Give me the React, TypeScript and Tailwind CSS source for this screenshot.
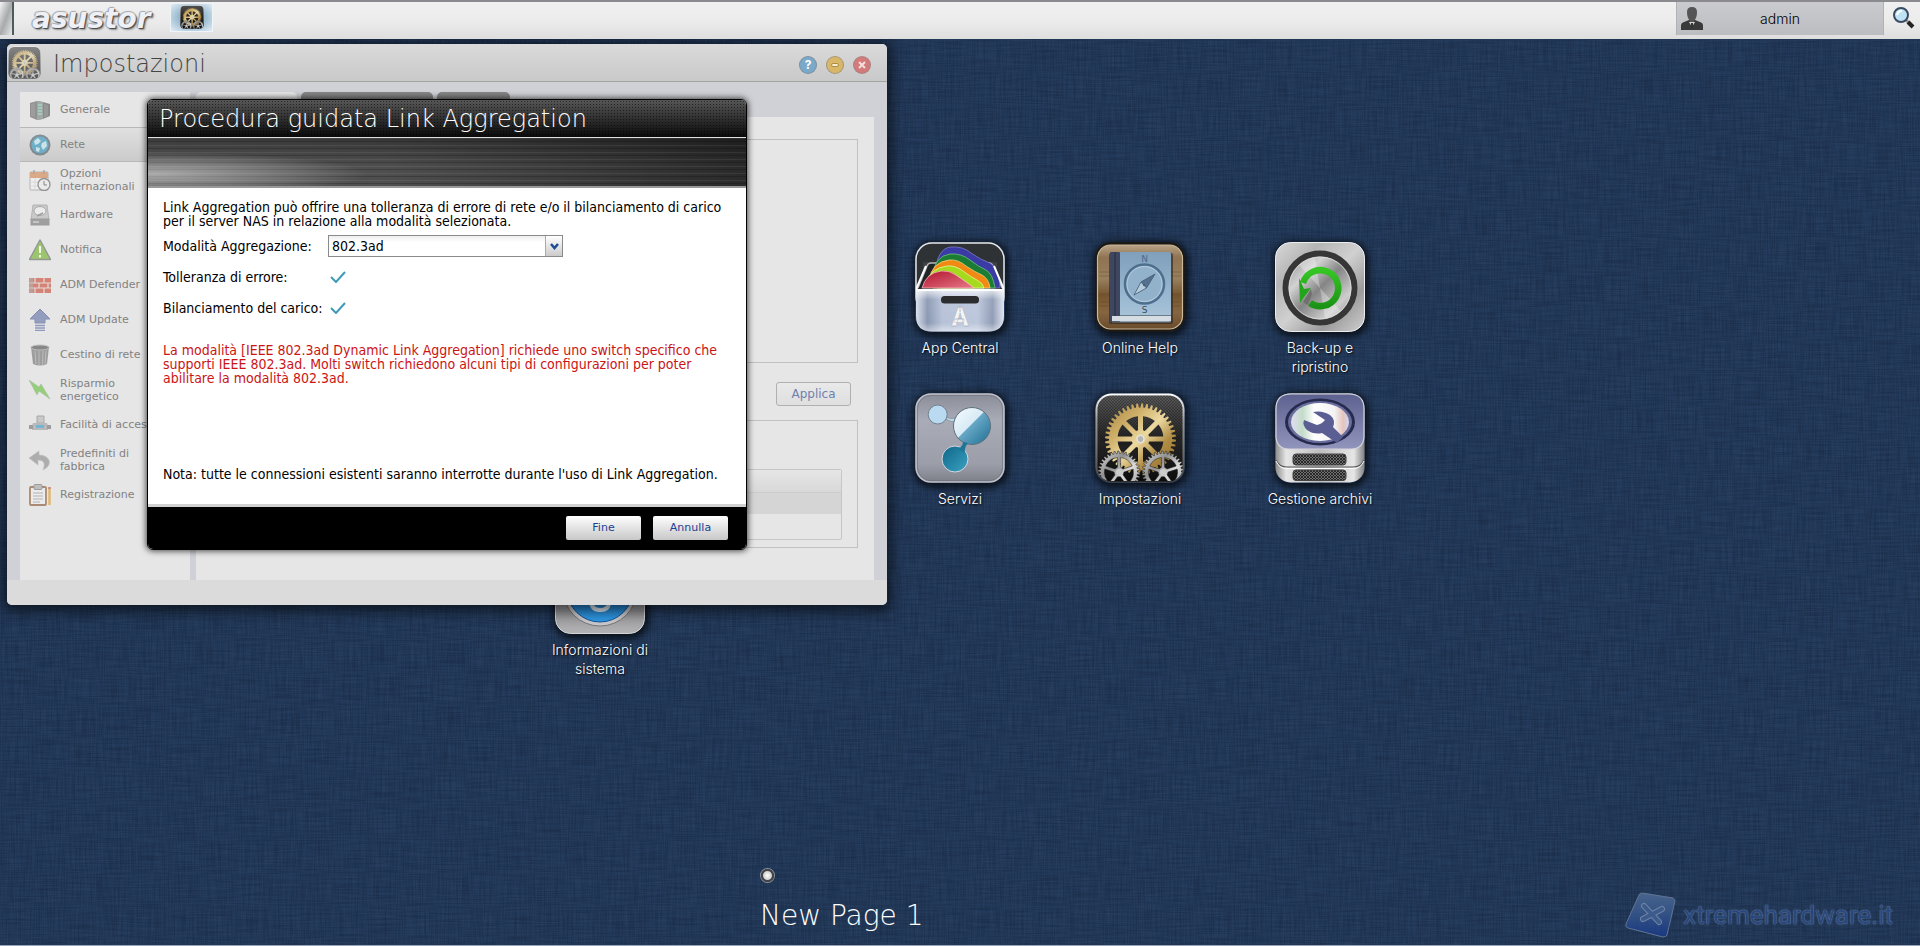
import React, { useState } from 'react';

// Outline of a toothed wheel with cut-out windows between the spokes (fill-rule: evenodd)
function gearPath(cx: number, cy: number, teeth: number, outer: number, root: number, spokes: number, rim: number, hub: number, half: number) {
  const pt = (r: number, a: number) => `${(cx + r * Math.cos(a)).toFixed(2)} ${(cy + r * Math.sin(a)).toFixed(2)}`;
  const step = (Math.PI * 2) / teeth;
  let d = '';
  for (let i = 0; i < teeth; i++) {
    const a = i * step;
    d += `${i ? 'L' : 'M'}${pt(root, a)}L${pt(outer, a + step * 0.15)}L${pt(outer, a + step * 0.5)}L${pt(root, a + step * 0.65)}`;
  }
  d += 'Z';
  const wedge = (Math.PI * 2) / spokes;
  for (let i = 0; i < spokes; i++) {
    const a0 = i * wedge - Math.PI / 2;
    const a1 = a0 + wedge;
    const dr = Math.asin(half / rim);
    const dh = Math.asin(half / hub);
    d += `M${pt(hub, a0 + dh)}L${pt(rim, a0 + dr)}A${rim} ${rim} 0 0 1 ${pt(rim, a1 - dr)}L${pt(hub, a1 - dh)}Z`;
  }
  return d;
}

const goldGear = gearPath(45.5, 46, 44, 35.5, 31.5, 8, 23, 9, 2.5);
const leftGear = gearPath(24, 79, 34, 21, 18.5, 5, 14.5, 5, 1.6);
const rightGear = gearPath(68, 79, 34, 21, 18.5, 5, 14.5, 5, 1.6);

function GearsIcon({ className }: { className?: string }) {
  return (
    <svg viewBox="0 0 90 90" className={className} aria-hidden="true">
      <defs>
        <linearGradient id="gearBack" x1="0" y1="0" x2="0" y2="1">
          <stop offset="0" stopColor="#5a5a5a" />
          <stop offset="0.5" stopColor="#262626" />
          <stop offset="1" stopColor="#0c0c0c" />
        </linearGradient>
        <linearGradient id="gearRim" x1="0" y1="0" x2="0" y2="1">
          <stop offset="0" stopColor="#fff" />
          <stop offset="0.3" stopColor="#999" />
          <stop offset="1" stopColor="#444" />
        </linearGradient>
        <linearGradient id="gold" x1="0" y1="0" x2="1" y2="1">
          <stop offset="0" stopColor="#a3803c" />
          <stop offset="0.3" stopColor="#cfb06a" />
          <stop offset="0.5" stopColor="#ecd9a0" />
          <stop offset="0.7" stopColor="#b08c44" />
          <stop offset="1" stopColor="#8d6b2b" />
        </linearGradient>
        <linearGradient id="silver" x1="0" y1="0" x2="1" y2="1">
          <stop offset="0" stopColor="#e8e8e8" />
          <stop offset="0.35" stopColor="#8f8f8f" />
          <stop offset="0.6" stopColor="#dcdcdc" />
          <stop offset="1" stopColor="#888" />
        </linearGradient>
        <pattern id="carbon" width="3" height="3" patternUnits="userSpaceOnUse">
          <path d="M0 0L3 3M3 0L0 3" stroke="#000" strokeOpacity="0.35" strokeWidth="0.6" />
        </pattern>
        <clipPath id="gearClip"><rect x="2" y="2" width="86" height="86" rx="14" /></clipPath>
      </defs>
      <rect x="0.5" y="0.5" width="89" height="89" rx="16" fill="url(#gearRim)" />
      <rect x="2.5" y="2.5" width="85" height="86" rx="14" fill="url(#gearBack)" />
      <rect x="2.5" y="2.5" width="85" height="50" rx="14" fill="url(#carbon)" />
      <g clipPath="url(#gearClip)">
        <path d={goldGear} fillRule="evenodd" fill="url(#gold)" />
        <circle cx="45.5" cy="46" r="5" fill="#e5d6a6" />
        <circle cx="45.5" cy="46" r="3.5" fill="#b5b5b5" stroke="#eee" />
        <path d={leftGear} fillRule="evenodd" fill="url(#silver)" stroke="#1a1a1a" strokeWidth="0.5" />
        <path d={rightGear} fillRule="evenodd" fill="url(#silver)" stroke="#1a1a1a" strokeWidth="0.5" />
        <circle cx="24" cy="79" r="3" fill="#ccc" />
        <circle cx="68" cy="79" r="3" fill="#ccc" />
      </g>
    </svg>
  );
}

function AppCentralIcon() {
  return (
    <svg viewBox="0 0 90 90" className="size-full" aria-hidden="true">
      <defs>
        <linearGradient id="acFront" x1="0" y1="0" x2="1" y2="0">
          <stop offset="0" stopColor="#d7deeb" />
          <stop offset="0.13" stopColor="#8593ae" />
          <stop offset="0.3" stopColor="#b3bfd6" />
          <stop offset="0.7" stopColor="#b9c4da" />
          <stop offset="0.87" stopColor="#8b98b2" />
          <stop offset="1" stopColor="#dde3ee" />
        </linearGradient>
        <linearGradient id="acShade" x1="0" y1="0" x2="0" y2="1">
          <stop offset="0" stopColor="#fff" stopOpacity="0.8" />
          <stop offset="0.25" stopColor="#fff" stopOpacity="0.1" />
          <stop offset="0.8" stopColor="#fff" stopOpacity="0.05" />
          <stop offset="1" stopColor="#fff" stopOpacity="0.5" />
        </linearGradient>
        <linearGradient id="acRed" x1="0" y1="0" x2="1" y2="1">
          <stop offset="0" stopColor="#b0122c" />
          <stop offset="1" stopColor="#e87a8a" />
        </linearGradient>
      </defs>
      <rect x="1" y="1" width="88" height="70" rx="16" fill="#2f3234" stroke="#e8e8e8" strokeWidth="1.5" />
      <path d="M8 20H82V48H8Z" fill="#3c4042" />
      <path d="M3 46L12 24Q13 21 16 21H74Q77 21 78 24L87 46" fill="#212427" stroke="#b5b5b5" strokeWidth="1.5" />
      <path d="M20 32Q22 6 36 5Q48 4 56 11Q66 18 75 21Q84 26 85 46H30Z" fill="#3b3ba6" stroke="#8484d6" strokeWidth="0.7" />
      <path d="M17 36Q19 14 35 12Q46 11 55 18Q64 25 71 28Q78 32 80 46H26Z" fill="#1b7d33" stroke="#7ed084" strokeWidth="0.7" />
      <path d="M14 38Q17 20 34 18Q43 17 51 24Q60 30 67 33Q74 37 75 46H22Z" fill="#f08a12" stroke="#ffd88c" strokeWidth="0.7" />
      <path d="M11 40Q16 26 32 24Q40 23 48 29Q56 35 62 38Q68 41 69 46H18Z" fill="#a6da1e" stroke="#ecffa8" strokeWidth="0.7" />
      <path d="M7 46Q11 31 26 29Q34 28 41 33Q48 38 54 42L59 46Z" fill="url(#acRed)" stroke="#ffc5c5" strokeWidth="0.7" />
      <path d="M1 47H89V74Q89 89.500 73 89.500H17Q1 89.500 1 74Z" fill="url(#acFront)" />
      <path d="M1 47H89V74Q89 89.500 73 89.500H17Q1 89.500 1 74Z" fill="url(#acShade)" />
      <path d="M11 24L2 45Q1 48 4 48H86Q89 48 88 45L79 24" fill="none" stroke="#fff" strokeWidth="2" />
      <rect x="26" y="54" width="38" height="7.500" rx="3.500" fill="#2c2d2e" />
      <text x="45" y="84" textAnchor="middle" fontSize="25" fontWeight="900" fontFamily="Roboto, sans-serif" fill="#f4f4f4" stroke="#8b94a8" strokeWidth="0.3">A</text>
    </svg>
  );
}

function HelpBookIcon() {
  return (
    <svg viewBox="0 0 90 90" className="size-full" aria-hidden="true">
      <defs>
        <linearGradient id="wood" x1="0" y1="0" x2="0" y2="1">
          <stop offset="0" stopColor="#b9a387" />
          <stop offset="0.15" stopColor="#8f7352" />
          <stop offset="0.4" stopColor="#98805f" />
          <stop offset="0.6" stopColor="#75552f" />
          <stop offset="0.8" stopColor="#866641" />
          <stop offset="1" stopColor="#6a4b2b" />
        </linearGradient>
        <linearGradient id="cover" x1="0" y1="0" x2="0" y2="1">
          <stop offset="0" stopColor="#7f9fbb" />
          <stop offset="1" stopColor="#a9c6dc" />
        </linearGradient>
      </defs>
      <rect x="0" y="0" width="90" height="90" rx="16" fill="#1c1814" />
      <rect x="2.500" y="3" width="85" height="84" rx="13" fill="url(#wood)" stroke="#c9b899" strokeWidth="1.200" />
      <path d="M4 30H86M4 34H86M4 52H86M4 60H86M4 64H86" stroke="#5c4120" strokeOpacity="0.35" />
      <rect x="14" y="11" width="64" height="71" rx="2" fill="#2a2118" fillOpacity="0.6" />
      <rect x="15" y="10" width="61" height="70" rx="2" fill="url(#cover)" />
      <rect x="15" y="10" width="10" height="70" rx="1" fill="#3e4660" />
      <path d="M20 10V80" stroke="#252b40" />
      <rect x="17" y="74" width="59" height="5" fill="#d6dde2" />
      <path d="M25 73.500H76M17 80H76" stroke="#6c7b88" />
      <circle cx="49.500" cy="42" r="19.500" fill="#92b1ca" stroke="#4e6e8e" strokeWidth="2.500" />
      <circle cx="49.500" cy="42" r="17.500" fill="none" stroke="#c4d8e6" strokeWidth="0.700" />
      <path d="M60 32L51.500 46L46 40Z" fill="#56718f" stroke="#3f5873" strokeWidth="0.800" />
      <path d="M39 53L51.500 46L46 40Z" fill="#b6cbdc" stroke="#3f5873" strokeWidth="0.800" />
      <circle cx="49" cy="43" r="1" fill="#3f5873" />
      <text x="49.500" y="20" textAnchor="middle" fontSize="9" fontFamily="DejaVu Sans, sans-serif" fill="#496a8c">N</text>
      <text x="49.500" y="71" textAnchor="middle" fontSize="9" fontFamily="DejaVu Sans, sans-serif" fill="#3b4a5a">S</text>
    </svg>
  );
}

function BackupIcon() {
  return (
    <svg viewBox="0 0 90 90" className="size-full" aria-hidden="true">
      <defs>
        <linearGradient id="buPlate" x1="0" y1="0" x2="1" y2="1">
          <stop offset="0" stopColor="#d9d9d9" />
          <stop offset="0.25" stopColor="#b5b5b5" />
          <stop offset="0.5" stopColor="#d0d0d0" />
          <stop offset="0.75" stopColor="#9c9c9c" />
          <stop offset="1" stopColor="#d0d0d0" />
        </linearGradient>
        <linearGradient id="buDisc" x1="0" y1="0" x2="1" y2="1">
          <stop offset="0" stopColor="#858585" />
          <stop offset="0.3" stopColor="#d2d2d2" />
          <stop offset="0.5" stopColor="#858585" />
          <stop offset="0.75" stopColor="#cdcdcd" />
          <stop offset="1" stopColor="#777" />
        </linearGradient>
        <linearGradient id="buGreen" x1="0" y1="0" x2="0" y2="1">
          <stop offset="0" stopColor="#35c623" />
          <stop offset="1" stopColor="#1b9416" />
        </linearGradient>
      </defs>
      <rect x="0.500" y="0.500" width="89" height="89" rx="15" fill="url(#buPlate)" stroke="#ededed" />
      <circle cx="45" cy="46" r="34.500" fill="url(#buDisc)" stroke="#363636" strokeWidth="6" />
      <circle cx="45" cy="46" r="31" fill="none" stroke="#ddd" strokeWidth="0.800" />
      <path d="M45 46L24 23A31 31 0 0 1 40 16Z" fill="#fff" fillOpacity="0.3" />
      <path d="M45 46L66 69A31 31 0 0 1 50 76Z" fill="#fff" fillOpacity="0.3" />
      <path d="M35 61A18 18 0 1 0 28 41" fill="none" stroke="url(#buGreen)" strokeWidth="6.500" />
      <path d="M24 36L25 61L29 55L36 46L29 47Z" fill="#23a51b" />
      <path d="M28 60L36 47L37 52L33 63Z" fill="#707070" />
    </svg>
  );
}

function ServicesIcon() {
  return (
    <svg viewBox="0 0 90 90" className="size-full" aria-hidden="true">
      <defs>
        <linearGradient id="svPlate" x1="0" y1="0" x2="0" y2="1">
          <stop offset="0" stopColor="#8a8c97" />
          <stop offset="0.3" stopColor="#a9abb6" />
          <stop offset="0.8" stopColor="#9b9da9" />
          <stop offset="1" stopColor="#7e8088" />
        </linearGradient>
        <linearGradient id="svBig" x1="0" y1="0" x2="1" y2="1">
          <stop offset="0" stopColor="#f5fbff" />
          <stop offset="0.46" stopColor="#d8eaf5" />
          <stop offset="0.48" stopColor="#68a7c6" />
          <stop offset="1" stopColor="#1c6d93" />
        </linearGradient>
        <linearGradient id="svLow" x1="0" y1="0" x2="1" y2="1">
          <stop offset="0" stopColor="#0f6587" />
          <stop offset="1" stopColor="#3ba3c3" />
        </linearGradient>
      </defs>
      <rect x="1" y="1" width="88" height="88" rx="15" fill="url(#svPlate)" stroke="#c0c1ca" strokeWidth="1.500" />
      <rect x="2.500" y="2.500" width="85" height="85" rx="13" fill="none" stroke="#6e707b" strokeOpacity="0.6" />
      <path d="M30 23Q35 27 40 25L41 29Q35 29 31 26Z" fill="#bcd9ec" stroke="#75808c" strokeWidth="0.600" />
      <circle cx="22.700" cy="21.500" r="9.500" fill="#b9daf0" stroke="#72818f" />
      <circle cx="57" cy="33" r="18.500" fill="url(#svBig)" stroke="#5e717e" />
      <circle cx="40" cy="66" r="13" fill="url(#svLow)" stroke="#d4d7de" />
      <path d="M48 49Q48 53 43 56L50 60Q49 55 53 50Z" fill="#1f7596" />
    </svg>
  );
}

function StorageIcon() {
  return (
    <svg viewBox="0 0 90 90" className="size-full" aria-hidden="true">
      <defs>
        <linearGradient id="stBody" x1="0" y1="0" x2="1" y2="0">
          <stop offset="0" stopColor="#8c8c8c" />
          <stop offset="0.12" stopColor="#e6e6e6" />
          <stop offset="0.5" stopColor="#bdbdbd" />
          <stop offset="0.88" stopColor="#e6e6e6" />
          <stop offset="1" stopColor="#808080" />
        </linearGradient>
        <linearGradient id="stLid" x1="0" y1="0" x2="0" y2="1">
          <stop offset="0" stopColor="#5d6190" />
          <stop offset="1" stopColor="#9194bb" />
        </linearGradient>
        <linearGradient id="stDisc" x1="0" y1="0" x2="1" y2="0">
          <stop offset="0" stopColor="#e0ddf0" />
          <stop offset="0.2" stopColor="#c3dcc9" />
          <stop offset="0.4" stopColor="#fff" />
          <stop offset="0.75" stopColor="#f3f3f3" />
          <stop offset="0.9" stopColor="#e5c3bd" />
          <stop offset="1" stopColor="#cfd9ee" />
        </linearGradient>
        <pattern id="mesh" width="3" height="3" patternUnits="userSpaceOnUse">
          <rect width="3" height="3" fill="#6e6e6e" />
          <path d="M0 0L3 3M3 0L0 3" stroke="#1c1c1c" strokeWidth="0.800" />
        </pattern>
      </defs>
      <rect x="0.500" y="0.500" width="89" height="89" rx="15" fill="url(#stBody)" />
      <path d="M1 67Q4 74 12 74H78Q86 74 89 67" fill="none" stroke="#555" strokeWidth="1.200" />
      <path d="M1 68Q4 75.500 12 75.500H78Q86 75.500 89 68" fill="none" stroke="#fff" />
      <path d="M1 16Q1 1 16 1H74Q89 1 89 16V44Q88 56 76 56H14Q2 56 1 44Z" fill="url(#stLid)" stroke="#d3d3dc" strokeWidth="1.200" />
      <ellipse cx="45" cy="29" rx="35" ry="23.500" fill="#262a4d" />
      <ellipse cx="45" cy="29" rx="32" ry="21" fill="#6a6e9f" />
      <ellipse cx="45" cy="29" rx="29" ry="19" fill="url(#stDisc)" />
      <path d="M38 19L50 27Q47 31 42 32L29 27Q27 32 32 37Q39 42 47 40L62 50L68 44L58 34Q61 27 55 22Q47 17 38 19Z" fill="#5a5e92" />
      <rect x="18" y="61" width="53" height="11" rx="3" fill="url(#mesh)" stroke="#444" />
      <rect x="18" y="77" width="53" height="10.500" rx="3" fill="url(#mesh)" stroke="#444" />
    </svg>
  );
}

function SystemInfoIcon() {
  return (
    <svg viewBox="0 0 90 90" className="size-full" aria-hidden="true">
      <defs>
        <linearGradient id="siPlate" x1="0" y1="0" x2="0" y2="1">
          <stop offset="0" stopColor="#e3e3e3" />
          <stop offset="0.75" stopColor="#949497" />
          <stop offset="1" stopColor="#b4b4b7" />
        </linearGradient>
        <linearGradient id="siBlue" x1="0" y1="0" x2="0" y2="1">
          <stop offset="0" stopColor="#0c4f9b" />
          <stop offset="1" stopColor="#2f9be6" />
        </linearGradient>
      </defs>
      <rect x="0.500" y="0.500" width="89" height="89" rx="15" fill="url(#siPlate)" stroke="#d5d5d5" />
      <circle cx="45" cy="45" r="37" fill="#c9c9cb" stroke="#77777a" />
      <circle cx="45" cy="45" r="33" fill="url(#siBlue)" stroke="#15539a" />
      <path d="M36 56Q36 66 45 66Q54 66 54 58V50" fill="none" stroke="#e4edf5" strokeWidth="4" />
      <path d="M45 22V50" stroke="#fff" strokeWidth="8" />
    </svg>
  );
}

/* 22px icons of the settings menu */
const menuIcons: Record<string, React.ReactNode> = {
  general: (
    <>
      <path d="M1 4L8 2L14 3V20L8 21L1 18Z" fill="#666" />
      <path d="M8 2V21L14 20V3Z" fill="#7d8a86" />
      <path d="M14 3L21 5V17L14 20Z" fill="#5a5a5a" />
      <path d="M9 6L13 6M9 9H13M9 12H13M9 15H13" stroke="#7fd0b4" strokeWidth="1.500" />
      <path d="M3 5V17M5 4V18M16 5V18M18 6V17" stroke="#999" strokeWidth="0.700" />
    </>
  ),
  network: (
    <>
      <circle cx="11" cy="11" r="10.500" fill="#56646e" />
      <circle cx="11" cy="11" r="8.500" fill="#3a9cc0" />
      <path d="M5 7L9 4L12 7L9 10L6 11ZM13 9L17 7L18 12L14 16L12 12ZM7 13L11 14L10 18L7 17Z" fill="#c6ecf6" />
    </>
  ),
  regional: (
    <>
      <rect x="1" y="3" width="18" height="18" rx="1" fill="#f4f4f4" stroke="#999" />
      <rect x="1" y="3" width="18" height="6" fill="#d68a55" />
      <path d="M5 1V5M15 1V5" stroke="#888" strokeWidth="1.500" />
      <path d="M1 13H19M1 17H19M6 9V21M11 9V21" stroke="#ccc" strokeWidth="0.800" />
      <circle cx="15" cy="15.500" r="6" fill="#eee" stroke="#666" strokeWidth="1.300" />
      <path d="M15 12V16H18" fill="none" stroke="#555" />
    </>
  ),
  hardware: (
    <>
      <path d="M4 1H18L20 16H2Z" fill="#bbb" stroke="#999" />
      <rect x="2" y="15" width="18" height="6" fill="#7a7a7a" stroke="#777" />
      <ellipse cx="11" cy="7" rx="6" ry="4.500" fill="#eee" stroke="#888" />
      <path d="M8 12L14 9" stroke="#777" strokeWidth="1.500" />
      <path d="M4 18H10" stroke="#eee" />
    </>
  ),
  notify: (
    <>
      <path d="M11 1L21.500 20.500H0.500Z" fill="#74b52c" stroke="#6a7066" strokeWidth="1.500" strokeLinejoin="round" />
      <path d="M11 7V14M11 16V18.500" stroke="#fff" strokeWidth="2" />
    </>
  ),
  defender: (
    <>
      <path d="M0 4H22V19H0Z" fill="#c9503c" />
      <path d="M0 9H22M0 14H22M6 4V9M15 4V9M10 9V14M19 9V14M6 14V19M15 14V19" stroke="#e6d8d0" strokeWidth="1.200" />
      <path d="M0 4H4V19H0Z" fill="#999" fillOpacity="0.5" />
    </>
  ),
  update: (
    <>
      <path d="M11 0L21 10H16V14H6V10H1Z" fill="#6878ab" stroke="#556394" />
      <path d="M6 16.500H16M6 19H16M6 21.500H16" stroke="#6070a5" strokeWidth="1.500" />
    </>
  ),
  bin: (
    <>
      <path d="M2 3L4 20Q11 23 18 20L20 3Z" fill="#777" />
      <ellipse cx="11" cy="3.500" rx="9" ry="2.500" fill="#555" stroke="#aaa" />
      <path d="M6 7L7 20M10 7V21M14 7L13.500 21M17 7L16 20" stroke="#aaa" strokeWidth="0.900" />
    </>
  ),
  power: <path d="M0 1L10 8L12 5L21 20L10 12L8 16Z" fill="#69c23f" stroke="#8fae7e" strokeWidth="0.700" />,
  access: (
    <>
      <path d="M8 2H15V9H8Z" fill="#bbb" stroke="#888" />
      <path d="M4 9H18L19 12V16H3V12Z" fill="#a2a2a2" />
      <path d="M0 11H4V15H0ZM18 11H22V15H18Z" fill="#777" />
      <rect x="7" y="11" width="8" height="3" fill="#3b9cc8" />
    </>
  ),
  reset: <path d="M10 2L0 9L9 16V11Q18 11 14 21Q22 17 20 11Q17 6 10 6Z" fill="#909090" stroke="#aaa" strokeWidth="0.600" />,
  register: (
    <>
      <rect x="1" y="3" width="16" height="18" rx="1" fill="#eee" stroke="#8b5a35" strokeWidth="1.800" />
      <rect x="5" y="0.500" width="8" height="5" rx="1" fill="#aaa" stroke="#777" />
      <path d="M4 9H14M4 12H14M4 15H14M4 18H11" stroke="#999" />
      <path d="M20.500 4V21" stroke="#e0a030" strokeWidth="2.500" />
      <path d="M20.500 3V5" stroke="#b55" strokeWidth="2.500" />
    </>
  ),
};

const menuItems = [
  { icon: 'general', label: 'Generale' },
  { icon: 'network', label: 'Rete' },
  { icon: 'regional', label: 'Opzioni\ninternazionali' },
  { icon: 'hardware', label: 'Hardware' },
  { icon: 'notify', label: 'Notifica' },
  { icon: 'defender', label: 'ADM Defender' },
  { icon: 'update', label: 'ADM Update' },
  { icon: 'bin', label: 'Cestino di rete' },
  { icon: 'power', label: 'Risparmio\nenergetico' },
  { icon: 'access', label: 'Facilità di accesso' },
  { icon: 'reset', label: 'Predefiniti di\nfabbrica' },
  { icon: 'register', label: 'Registrazione' },
];

const shortcuts = [
  { label: 'App Central', icon: <AppCentralIcon />, place: 'col-start-3 row-start-1' },
  { label: 'Online Help', icon: <HelpBookIcon />, place: 'col-start-4 row-start-1' },
  { label: 'Back-up e ripristino', icon: <BackupIcon />, place: 'col-start-5 row-start-1' },
  { label: 'Servizi', icon: <ServicesIcon />, place: 'col-start-3 row-start-2' },
  { label: 'Impostazioni', icon: <GearsIcon className="size-full" />, place: 'col-start-4 row-start-2' },
  { label: 'Gestione archivi', icon: <StorageIcon />, place: 'col-start-5 row-start-2' },
  { label: 'Informazioni di sistema', icon: <SystemInfoIcon />, place: 'col-start-1 row-start-3' },
];

function CheckMark() {
  return (
    <svg viewBox="0 0 16 12" className="ml-0.5 h-3 w-4" role="img" aria-label="Sì">
      <path d="M1 6L6 11L15 1" fill="none" stroke="#3d9bb8" strokeWidth="2" />
    </svg>
  );
}

function TopBar() {
  return (
    <header className="relative z-10 flex h-[39px] items-start border-t-2 border-[#8b8b8f] bg-linear-to-b from-[#f0f0f0] via-[#ececec] to-[#dedede]">
      <div className="h-[33px] w-[14px] border-r-2 border-[#4c5b5b] bg-linear-to-br from-[#f5f5f5] via-[#a8aaac] to-[#e8e8e8]" />
      <span className='ml-[18px] w-[122px] font-["DejaVu_Sans"] text-[28px] leading-[33px] font-bold text-[#eef0f6] italic [text-shadow:1px_1px_1px_#444,-1px_0_1px_#9a9dab,0_-1px_1px_#aaa,2px_2px_2px_#999]'>
        asustor
      </span>
      <button aria-label="Impostazioni" className="mt-px ml-4 flex h-[29px] w-[43px] items-start justify-center border border-[#eef4f8] bg-radial from-[#5f93b5] to-[#e3edf3] pt-px">
        <GearsIcon className="size-6" />
      </button>
      <button className="relative ml-auto flex h-[33px] w-52 items-center justify-center border-x border-[#b0b2b6] bg-linear-to-b from-[#c9cbcf] to-[#bbbdc1] font-['Inter'] text-sm font-light text-black">
        <svg viewBox="0 0 22 24" className="absolute top-1 left-1 h-6 w-[22px]" aria-hidden="true">
          <path d="M0 24V19Q0 17 3 16L8 14H14L19 16Q22 17 22 19V24Z" fill="#3a3a3a" />
          <path d="M6 6Q6 1 11 1Q16 1 16 6Q16 12 13 15V16H9V15Q6 12 6 6Z" fill="#555" />
          <path d="M8 16L11 21L14 16Z" fill="#d5d5d5" />
          <path d="M10 17H12L12 22H10Z" fill="#333" />
        </svg>
        admin
      </button>
      <button aria-label="Cerca" className="mt-1 mr-1 ml-2">
        <svg viewBox="0 0 24 24" className="size-6">
          <path d="M14 14L17 17" stroke="#999" strokeWidth="3" />
          <path d="M16 16L21 21" stroke="#222" strokeWidth="4" />
          <circle cx="9" cy="9" r="7" fill="#bfe2f5" stroke="#3b4a60" strokeWidth="2" />
          <path d="M5 9Q6 5 10 5" fill="none" stroke="#fff" strokeWidth="2" />
        </svg>
      </button>
    </header>
  );
}

function WindowButtons() {
  return (
    <div className="mt-1 ml-auto flex gap-[11px] pr-[17px]">
      <button aria-label="Aiuto" className="flex size-4 items-center justify-center rounded-full bg-[#7aa9ca] font-['Inter'] text-[12px] font-bold text-white ring-1 ring-[#7a8f9e]">?</button>
      <button aria-label="Riduci" className="flex size-4 items-center justify-center rounded-full bg-[#d8b768] ring-1 ring-[#a39577]">
        <span className="h-1 w-2 rounded-xs border border-[#b08c40] bg-[#f6ecd0]" />
      </button>
      <button aria-label="Chiudi" className="flex size-4 items-center justify-center rounded-full bg-[#d37a7a] ring-1 ring-[#a88384]">
        <svg viewBox="0 0 10 10" className="size-2.5"><path d="M2 2L8 8M8 2L2 8" stroke="#f5dede" strokeWidth="2" /></svg>
      </button>
    </div>
  );
}

function LinkAggregationDialog() {
  const [mode, setMode] = useState('802.3ad');

  return (
    <section role="dialog" aria-labelledby="wizard-title" className="absolute top-[55px] left-[140px] w-[600px] overflow-hidden rounded-md border border-black bg-white font-['DejaVu_Sans_Condensed'] text-[14px] leading-[14px] text-black shadow-[0_0_6px_1px_rgba(0,0,0,0.7)]">
      <div className="flex h-[38px] items-center border-b border-[#e0e0e0] bg-[radial-gradient(rgba(0,0,0,0.5)_1px,transparent_1px),linear-gradient(to_bottom,#565656,#0a0a0a)] bg-[size:3px_3px,100%_100%] pl-[11px]">
        <h2 id="wizard-title" className='pt-px font-["DejaVu_Sans_Light"] text-2xl text-white'>Procedura guidata Link Aggregation</h2>
      </div>
      <div className="h-[50px] border-b-2 border-[#999] bg-[radial-gradient(ellipse_220px_22px_at_0_75%,rgba(255,255,255,0.5),transparent),repeating-linear-gradient(to_bottom,rgba(255,255,255,0.07)_0_1px,transparent_1px_3px,rgba(0,0,0,0.2)_3px_4px,transparent_4px_7px),linear-gradient(to_bottom,rgba(0,0,0,0.3),transparent_60%),linear-gradient(to_right,#555,#4e4e4e_40%,#2a2a2a)]" />
      <div className="px-[15px] pt-3 pb-[23px]">
        <p>
          Link Aggregation può offrire una tolleranza di errore di rete e/o il bilanciamento di carico
          <br />
          per il server NAS in relazione alla modalità selezionata.
        </p>
        <div className="mt-[7px] grid grid-cols-[165px_1fr] items-center">
          <label htmlFor="mode">Modalità Aggregazione:</label>
          <div className="relative w-[235px]">
            <select id="mode" value={mode} onChange={(e) => setMode(e.target.value)} className="block h-[22px] w-full appearance-none border border-[#8a8a8a] bg-linear-to-b from-[#eee] to-white to-30% pl-[3px]">
              <option>802.3ad</option>
              <option>Active-Backup</option>
              <option>Round-Robin</option>
            </select>
            <span className="pointer-events-none absolute inset-y-px right-px flex w-[17px] items-center justify-center border-l border-[#aaa] bg-linear-to-b from-white to-[#ccc]">
              <svg viewBox="0 0 9 7" className="h-[7px] w-[9px]"><path d="M1 1L4.500 5L8 1" fill="none" stroke="#1d4b94" strokeWidth="2.500" /></svg>
            </span>
          </div>
        </div>
        <dl className="mt-1 grid auto-rows-[31px] grid-cols-[165px_1fr] items-center">
          <dt>Tolleranza di errore:</dt>
          <dd><CheckMark /></dd>
          <dt>Bilanciamento del carico:</dt>
          <dd><CheckMark /></dd>
        </dl>
        <p className="mt-5 text-[#cc1414]">
          La modalità [IEEE 802.3ad Dynamic Link Aggregation] richiede uno switch specifico che
          <br />
          supporti IEEE 802.3ad. Molti switch richiedono alcuni tipi di configurazioni per poter
          <br />
          abilitare la modalità 802.3ad.
        </p>
        <p className="mt-[82px]">Nota: tutte le connessioni esistenti saranno interrotte durante l'uso di Link Aggregation.</p>
      </div>
      <div className="flex justify-end gap-3 border-t-3 border-[#d2d2d2] bg-black px-[18px] py-[9px] font-['DejaVu_Sans'] text-[11px] text-[#1c3f94]">
        <button className="h-6 w-[75px] rounded-xs bg-linear-to-b from-white to-[#c8c8c8]">Fine</button>
        <button className="h-6 w-[75px] rounded-xs bg-linear-to-b from-white to-[#c8c8c8]">Annulla</button>
      </div>
    </section>
  );
}

function SettingsWindow() {
  return (
    <section className="absolute top-[5px] left-[7px] flex h-[561px] w-[880px] flex-col rounded-[5px] bg-[#d0d1d6] shadow-[0_2px_14px_4px_rgba(0,0,0,0.6)]">
      <div className="flex h-[38px] shrink-0 items-center rounded-t-[5px] border-b border-[#a2a4a2] bg-linear-to-b from-[#dadada] to-[#c9c9c9] pl-px">
        <GearsIcon className="size-[33px] opacity-60" />
        <h1 className='ml-3 pt-0.5 font-["DejaVu_Sans_Light"] text-2xl text-[#444]'>Impostazioni</h1>
        <WindowButtons />
      </div>
      <div className="flex flex-1 gap-1.5 px-[13px] pt-2.5">
        <nav className="w-[170px] bg-[#e6e6e6] font-['DejaVu_Sans'] text-[11px] leading-[13px] text-[#828282]">
          {menuItems.map((item) => (
            <a
              key={item.label}
              href="#"
              className={`flex h-[35px] items-center gap-[9px] overflow-hidden pl-[9px] whitespace-pre ${item.icon === 'network' ? 'border-y border-[#b8b8b8] bg-linear-to-b from-[#e0e0e0] to-[#cbcbcb]' : ''}`}
            >
              <svg viewBox="0 0 22 22" className="size-[22px] shrink-0 opacity-65" aria-hidden="true">{menuIcons[item.icon]}</svg>
              {item.label}
            </a>
          ))}
        </nav>
        <div className="flex flex-1 flex-col">
          <div className="flex h-[25px] gap-1">
            <div className="w-[101px] rounded-t-[5px] bg-[#e6e6e6]" />
            <div className="w-[132px] rounded-t-[5px] bg-[#868686]" />
            <div className="w-[73px] rounded-t-[5px] bg-[#868686]" />
          </div>
          <div className="flex flex-1 flex-col bg-[#e6e6e6] px-4 pt-[22px]">
            <div className="h-[224px] border border-[#c0c0c0]" />
            <button className="mt-[19px] mr-[7px] h-6 w-[75px] self-end rounded-[3px] border border-[#b0b0b0] bg-linear-to-b from-[#e9e9e9] to-[#dfdfdf] font-['DejaVu_Sans'] text-[12px] text-[#7080b0]">Applica</button>
            <div className="mt-3.5 h-[128px] border border-[#c0c0c0] px-[15px] pt-12">
              <div className="h-[71px] rounded-xs border border-[#c6c6c6]">
                <div className="h-[23px] border-b border-[#ccc] bg-linear-to-b from-[#e6e6e6] to-[#d8d8d8]" />
                <div className="h-[21px] bg-[#d5d5d5]" />
              </div>
            </div>
          </div>
        </div>
      </div>
      <div className="h-[25px] shrink-0 rounded-b-[5px] bg-[#dbdbdb]" />
      <LinkAggregationDialog />
    </section>
  );
}

function Watermark() {
  return (
    <div className="absolute right-[27px] bottom-[6px] flex items-center gap-1.5 opacity-70">
      <svg viewBox="0 0 52 48" className="h-12 w-[52px]" aria-hidden="true">
        <defs>
          <linearGradient id="wm" x1="0" y1="0" x2="0" y2="1">
            <stop offset="0" stopColor="#5878a4" />
            <stop offset="0.5" stopColor="#3a5c98" />
            <stop offset="1" stopColor="#173a94" />
          </linearGradient>
        </defs>
        <path d="M17 2L48 7Q50 8 50 10L42 44Q41 46 38 46L3 37Q0 36 1 33L14 4Q15 2 17 2Z" fill="url(#wm)" stroke="#7b8fb0" />
        <path d="M19 15L34 31M37 18L18 28" stroke="#8fa3c4" strokeWidth="6" strokeLinecap="round" />
        <path d="M19 15L34 31M37 18L18 28" stroke="#486aa2" strokeWidth="4" strokeLinecap="round" />
      </svg>
      <span className="font-['Roboto'] text-[26px] leading-8 text-[#2c4f8f] [text-shadow:0_0_1px_#8fa3c4,0_0_2px_#7b90b4]">xtremehardware.it</span>
    </div>
  );
}

export default function App() {
  return (
    <div className="flex min-h-screen flex-col bg-[#273e5f]">
      <TopBar />
      <main className="relative flex flex-1 flex-col overflow-hidden border-b border-[#9aa6b6]">
        {/* Linen weave of the wallpaper */}
        <svg className="absolute inset-0 size-full" aria-hidden="true">
          <filter id="weftNoise" colorInterpolationFilters="sRGB"><feTurbulence type="fractalNoise" baseFrequency="0.03 0.7" numOctaves="2" seed="3" /><feColorMatrix values="0 0 0 0 0.03  0 0 0 0 0.08  0 0 0 0 0.16  0 0 0 2.4 -0.8" /></filter>
          <filter id="warpNoise" colorInterpolationFilters="sRGB"><feTurbulence type="fractalNoise" baseFrequency="0.7 0.03" numOctaves="2" seed="8" /><feColorMatrix values="0 0 0 0 0.03  0 0 0 0 0.08  0 0 0 0 0.16  0 0 0 2.4 -0.8" /></filter>
          <rect width="100%" height="100%" filter="url(#weftNoise)" opacity="0.2" />
          <rect width="100%" height="100%" filter="url(#warpNoise)" opacity="0.2" />
        </svg>

        <div className="relative mx-auto grid auto-rows-[151px] grid-cols-[repeat(5,180px)] pt-[203px]">
          {shortcuts.map((item) => (
            <button key={item.label} className={`flex flex-col items-center gap-1.5 self-start justify-self-center ${item.place}`}>
              <span className="size-[90px] rounded-[16px] shadow-[1px_2px_7px_3px_rgba(0,0,0,0.65)]">{item.icon}</span>
              <span className='max-w-[120px] font-["Inter"] text-[14px] leading-[19px] font-light text-white [text-shadow:1px_1px_2px_#000]'>{item.label}</span>
            </button>
          ))}
        </div>

        <div className="relative mx-auto mt-auto flex w-[400px] flex-col items-start gap-[18px] pb-[13px]">
          <button aria-label="New Page 1" className="ml-px size-[13px] rounded-full border-2 border-[#444] bg-radial from-white to-[#bbb] ring-1 ring-[#8892a0]" />
          <p className='font-["DejaVu_Sans_Light"] text-[28px] leading-8 text-white'>New Page 1</p>
        </div>

        <Watermark />
        <SettingsWindow />
      </main>
    </div>
  );
}
